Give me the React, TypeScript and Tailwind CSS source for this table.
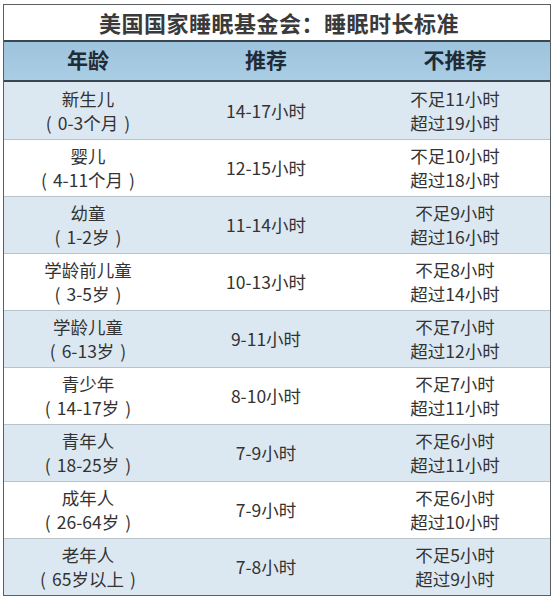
const rows: [string, string, string, string, string][] = [
  ["新生儿", "0-3个月", "14-17小时", "不足11小时", "超过19小时"],
  ["婴儿", "4-11个月", "12-15小时", "不足10小时", "超过18小时"],
  ["幼童", "1-2岁", "11-14小时", "不足9小时", "超过16小时"],
  ["学龄前儿童", "3-5岁", "10-13小时", "不足8小时", "超过14小时"],
  ["学龄儿童", "6-13岁", "9-11小时", "不足7小时", "超过12小时"],
  ["青少年", "14-17岁", "8-10小时", "不足7小时", "超过11小时"],
  ["青年人", "18-25岁", "7-9小时", "不足6小时", "超过11小时"],
  ["成年人", "26-64岁", "7-9小时", "不足6小时", "超过10小时"],
  ["老年人", "65岁以上", "7-8小时", "不足5小时", "超过9小时"],
];

export default function App() {
  return (
    <div
      className="w-[554px] h-[600px] bg-white pt-[4px] pl-[3px]"
      style={{ fontFamily: '"Noto Sans CJK SC", "Noto Sans", sans-serif' }}
    >
      <div className="w-[548px] border border-[#5a5f63]">
        <div className="h-[35px] flex items-center justify-center pl-[4px] text-[22px] font-bold text-[#3a3a3a] tracking-[0.5px]">
          美国国家睡眠基金会：睡眠时长标准
        </div>
        <div className="h-[42px] grid grid-cols-[168px_188px_190px] border-y-2 border-[#3c4650] bg-gradient-to-b from-[#9ec3dd] to-[#a9cde3] text-[21px] font-bold text-[#1f2b36]">
          <div className="flex items-center justify-center pb-[2px]">年龄</div>
          <div className="flex items-center justify-center pb-[2px]">推荐</div>
          <div className="flex items-center justify-center pb-[2px]">不推荐</div>
        </div>
        {rows.map((r, i) => (
          <div
            key={i}
            className={`h-[57px] grid grid-cols-[168px_188px_190px] text-[17.5px] text-[#333] leading-[24px] ${
              i > 0 ? "border-t border-[#b9c3ca]" : ""
            } ${i % 2 === 0 ? "bg-[#dce8f1]" : "bg-white"}`}
          >
            <div className="flex flex-col items-center justify-center">
              <span>{r[0]}</span>
              <span className="flex">
                <span className="pr-[6px]">(</span>
                <span>{r[1]}</span>
                <span className="pl-[6px]">)</span>
              </span>
            </div>
            <div className="flex items-center justify-center">{r[2]}</div>
            <div className="flex flex-col items-center justify-center">
              <span>{r[3]}</span>
              <span>{r[4]}</span>
            </div>
          </div>
        ))}
      </div>
    </div>
  );
}
